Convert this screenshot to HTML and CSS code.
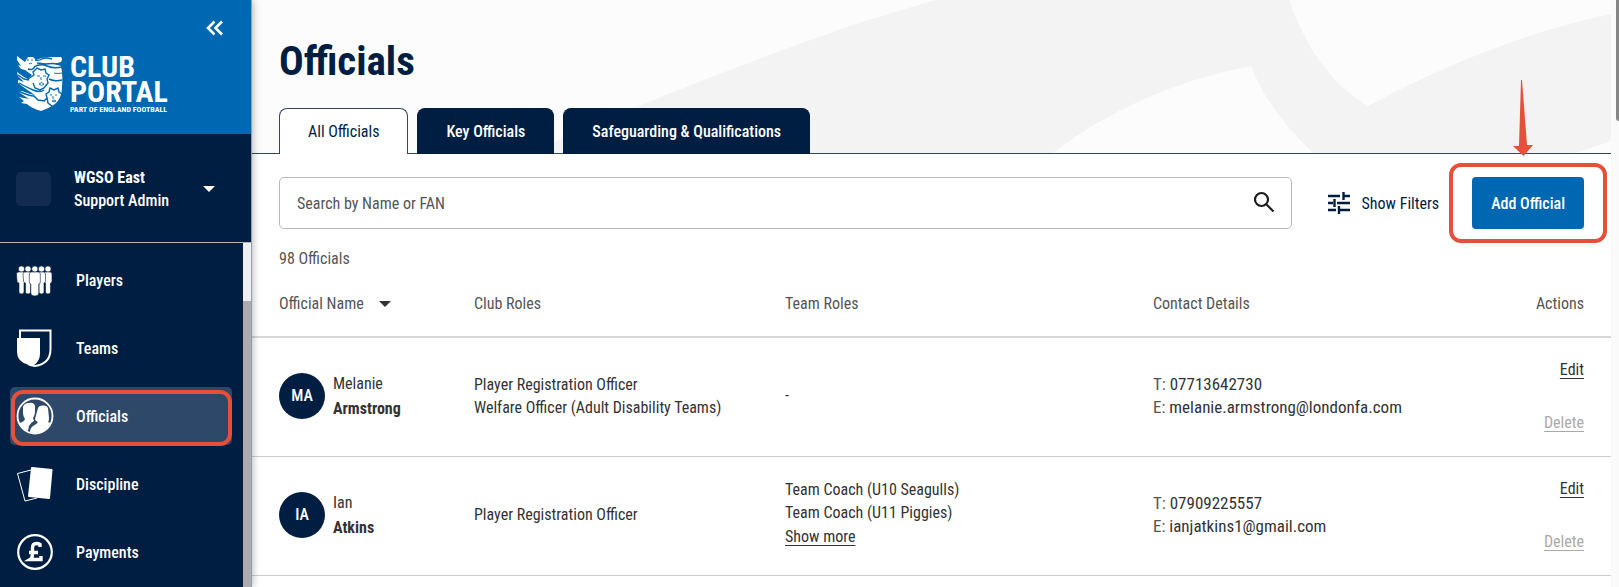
FILE: index.html
```html
<!DOCTYPE html>
<html lang="en">
<head>
  <meta charset="utf-8">
  <title>Club Portal - Officials</title>
  <meta name="viewport" content="width=device-width, initial-scale=1.0">
  <link rel="stylesheet" href="styles.css">
</head>
<body>
  <aside class="sidebar">
    <div class="brand">
      <button class="collapse" aria-label="Collapse menu">
        <svg width="18" height="16" viewBox="0 0 18 16" fill="none" stroke="#fff" stroke-width="2.6"><path d="M8.500 1.500 2 8l6.500 6.500M16 1.500 9.500 8l6.500 6.500"/></svg>
      </button>
      <a class="logo" href="#">
        <svg width="48" height="57" viewBox="0 0 48 57">
          <path fill="#fff" d="M1 1 5 4 9 7 12 2 17 2 20 5 26 3 34 2 45 2Q47 4 45 7L38 9 45 11Q47 20 46 32Q46 43 39 49Q32 54 25 56Q15 53 11 49L5 48 8 46 3 42 8 43 13 44 4 38 2 36 6 36 14 39 19 40 10 34 2 28 2 25 8 27 2 21 1 17 8 22 12 24 16 20 9 15 5 14 2 10 5 11 1 5Z"/>
          <g fill="none" stroke="#0068b3">
            <path stroke-width="1.400" d="M19 5Q23 6 26 4T36 4M21 8 30 9Q35 8 44 9M18 12Q24 8 31 11T46 12M12 24 18 20 17 17 21 13 25 15 29 14 30 18 33 20 31 24 32 28 28 33 24 35 19 33 17 28M33 24Q39 27 46 25M3 28Q10 32 17 35T28 35M2 20 8 24 13 25M2 36Q13 41 18 41L22 45 29 46M28 46 31 43 30 39 33 37 34 33 38 35 42 33 43 37 46 39M12 14Q17 16 19 11M31 43 32 48 36 51"/>
            <path stroke-width=".900" d="M21 21h3M27 21h3M25 22v3M23 29Q26 26 28 29Q26 32 23 29M11 5h2M15 5h2M13 9Q15 7 16 9M34 40h2M39 40h2M37 41v3M36 46Q38 44 40 46Q38 48 36 46M38 18Q42 19 46 18"/>
          </g>
        </svg>
        <span class="logo-text">
          <span>CLUB</span>
          <span>PORTAL</span>
          <small>PART OF ENGLAND FOOTBALL</small>
        </span>
      </a>
    </div>

    <button class="account">
      <span class="badge"></span>
      <span class="who"><strong>WGSO East</strong><span>Support Admin</span></span>
      <svg width="12" height="6" viewBox="0 0 12 6"><path fill="#fff" d="M0 0h12L6 6z"/></svg>
    </button>

    <div class="nav-wrap">
      <nav class="nav">
        <a href="#">
          <svg width="38" height="38" viewBox="0 0 38 38" fill="#fff" stroke="#001e42" stroke-width=".6">
            <g id="man"><circle cx="5.500" cy="8" r="3.100"/><path d="M.5 13q0-2 2-2h5q2 0 2 2v7q0 2-1.500 2v9q0 2-2.500 2t-2.500-2v-9q-2 0-2-2z"/></g>
            <use href="#man" x="26.500"/>
            <use href="#man" x="6.500"/>
            <use href="#man" x="20"/>
            <circle cx="18.800" cy="8" r="3.100"/><path d="M13.300 13q0-2 2-2h7q2 0 2 2v8q0 2-1.500 2v9q0 3-4 3t-4-3v-9q-1.500 0-1.500-2z"/>
          </svg>
          Players
        </a>
        <a href="#">
          <svg width="38" height="38" viewBox="0 0 38 38">
            <path fill="none" stroke="#fff" stroke-width="2" d="M4 9V1.500h30.500V20q0 15-15.500 17-4-.500-7-2"/>
            <path fill="#fff" d="M1 9h23v16q0 7-6 11h-5Q1 33 1 23z"/>
          </svg>
          Teams
        </a>
        <a href="#" class="active">
          <svg width="38" height="38" viewBox="0 0 38 38">
            <circle cx="19" cy="19" r="17.500" fill="none" stroke="#fff" stroke-width="1.800"/>
            <path fill="#fff" d="M7 10q1-4 6-4 5-1 6 3v7q-1 4-2 5l1 3q-4 2-5 5l-1 5Q6 32 3 26q5-1 6-4-2-3-2-6z"/>
            <path fill="#fff" d="M22 11q1-3 5-2.500 4-.500 5 2.500l1 10q0 3-1 4 3 1 2 2-4 9-15 9-3 0-5-1 0-4 3-6 4-2 5-4-3-1-3-3z"/>
          </svg>
          Officials
          <span class="ring"></span>
        </a>
        <a href="#">
          <svg width="38" height="38" viewBox="0 0 38 38">
            <path fill="none" stroke="#fff" d="M15 5 1.500 8.500 9 36l12-3"/>
            <path fill="#fff" d="M16 2l20 2q.5 0 .5 1L34 33q0 1-1 1l-20-2q-1 0-1-1l3-28q0-1 1-1z"/>
          </svg>
          Discipline
        </a>
        <a href="#">
          <svg width="38" height="38" viewBox="0 0 38 38">
            <circle cx="19" cy="19" r="16.800" fill="none" stroke="#fff" stroke-width="2.200"/>
            <path fill="none" stroke="#fff" stroke-width="3.400" d="M24 14v-2.500q-1.500-1-3.500-1-4 0-4 4.500v6q0 4-2.500 5.500h11v-3.500M13 19.500h9"/>
          </svg>
          Payments
        </a>
      </nav>
      <div class="nav-scroll"><span></span></div>
    </div>
  </aside>

  <main class="main">
    <header class="hero">
      <svg class="hero-art" viewBox="252 0 1359 153" preserveAspectRatio="xMaxYMin slice">
        <path fill="#f3f3f3" d="M936 0Q890 13 850 26Q680 85 530 153H1053Q1137 88 1251 66Q1268 110 1313 153H1576L1611 141V14Q1490 40 1368 106Q1315 75 1289 0Z"/>
      </svg>
      <h1>Officials</h1>
      <div class="tabs">
        <button class="tab selected">All Officials</button>
        <button class="tab">Key Officials</button>
        <button class="tab">Safeguarding &amp; Qualifications</button>
      </div>
    </header>

    <div class="toolbar">
      <div class="search">
        <input type="text" aria-label="Search officials" placeholder="Search by Name or FAN">
        <svg width="24" height="24" viewBox="0 0 24 24" fill="none" stroke="#1c1c1c" stroke-width="2.200"><circle cx="9.500" cy="8.500" r="6.500"/><path d="m14.500 13.500 7 7"/></svg>
      </div>
      <button class="filters">
        <svg width="22" height="22" viewBox="0 0 22 22" fill="none" stroke="#001e42" stroke-width="2.400"><path d="M0 4h12M15.500 4H22M15.500 0v8M0 11h5M9 11h13M6.500 7v8M0 18h8M11 18h11M11 14v8"/></svg>
        Show Filters
      </button>
      <div class="add">
        <button class="primary">Add Official</button>
        <span class="ring"></span>
        <svg class="arrow" width="22" height="76" viewBox="0 0 22 76"><path fill="#e64f3a" d="M9 0h1l5 65h6L11.500 76 1 66h6z"/></svg>
      </div>
    </div>

    <p class="count">98 Officials</p>

    <table class="officials">
      <colgroup><col class="c-name"><col class="c-club"><col class="c-team"><col><col class="c-act"></colgroup>
      <thead>
        <tr>
          <th>Official Name <svg width="12" height="6" viewBox="0 0 12 6"><path fill="#333" d="M0 0h12L6 6z"/></svg></th>
          <th>Club Roles</th>
          <th>Team Roles</th>
          <th>Contact Details</th>
          <th class="actions">Actions</th>
        </tr>
      </thead>
      <tbody>
        <tr>
          <td><div class="person"><span class="initials">MA</span><span class="name">Melanie<b>Armstrong</b></span></div></td>
          <td>Player Registration Officer<br>Welfare Officer (Adult Disability Teams)</td>
          <td>-</td>
          <td class="contact"><i>T:</i> 07713642730<br><i>E:</i> melanie.armstrong@londonfa.com</td>
          <td class="actions"><a href="#">Edit</a><a href="#" class="off">Delete</a></td>
        </tr>
        <tr>
          <td><div class="person"><span class="initials">IA</span><span class="name">Ian<b>Atkins</b></span></div></td>
          <td>Player Registration Officer</td>
          <td>Team Coach (U10 Seagulls)<br>Team Coach (U11 Piggies)<br><a href="#" class="more">Show more</a></td>
          <td class="contact"><i>T:</i> 07909225557<br><i>E:</i> ianjatkins1@gmail.com</td>
          <td class="actions"><a href="#">Edit</a><a href="#" class="off">Delete</a></td>
        </tr>
      </tbody>
    </table>
  </main>
  <div class="page-scroll"><span></span></div>
</body>
</html>
```
FILE: styles.css
```css
* { box-sizing: border-box; }
body { display: flex; height: 100vh; margin: 0; overflow: hidden; background: #fff; color: #333; font: 400 16px/23px "Roboto Condensed", Roboto, sans-serif; }
button, input { font: inherit; }
button { padding: 0; border: none; background: none; cursor: pointer; }
svg { flex: none; }

.sidebar { position: relative; z-index: 1; display: flex; flex-direction: column; flex: none; width: 252px; background: #001e42; color: #fff; border-right: 1px solid #8fa0b3; box-shadow: 0 0 8px rgba(0, 0, 0, .35); }
.brand { display: flex; flex-direction: column; height: 134px; padding: 20px 27px 0 16px; background: #0068b3; }
.collapse { align-self: flex-end; height: 16px; line-height: 0; }
.logo { display: flex; gap: 6px; margin-top: 18px; color: #fff; text-decoration: none; }
.logo svg { margin-top: 1px; }
.logo-text { display: flex; flex-direction: column; font-size: 30px; font-weight: 700; line-height: 25px; }
.logo-text small { margin-top: 2px; font-size: 8px; line-height: 8px; white-space: nowrap; }
.account { display: flex; align-items: center; height: 109px; padding: 2px 36px 0 16px; border-bottom: 1px solid #b5b5b5; color: #fff; text-align: left; }
.badge { width: 35px; height: 34px; border-radius: 5px; background: #122c50; }
.who { display: flex; flex: 1; flex-direction: column; margin-left: 23px; font-weight: 500; }
.nav-wrap { display: flex; flex: 1; min-height: 0; }
.nav { display: flex; flex: 1; flex-direction: column; gap: 10px; padding: 8px 11px 0 10px; overflow: hidden; font-weight: 500; }
.nav a { position: relative; display: flex; flex: none; align-items: center; gap: 22px; height: 58px; padding-left: 6px; border-radius: 5px; color: #fff; text-decoration: none; }
.nav .active { background: #2e4869; }
.nav-scroll { width: 8px; padding-top: 58px; background: #efefef; }
.nav-scroll span { display: block; height: 100%; background: #acacac; }

.ring { position: absolute; border: 4px solid #e64f3a; border-radius: 12px; pointer-events: none; }
.nav .ring { inset: 3px 0 -1px 1px; }
.add { position: relative; }
.add .ring { inset: -14px -23px; }
.arrow { position: absolute; bottom: 73px; left: 40px; }

.main { flex: 1; min-width: 0; }
.hero { position: relative; height: 154px; padding: 37px 27px 0; background: #fcfcfc; border-bottom: 1px solid #33475f; }
.hero-art { position: absolute; inset: 0; width: 100%; height: 100%; }
h1 { position: relative; margin: 0 0 23px; color: #001e42; font-size: 41px; font-weight: 700; line-height: 48px; }
.tabs { position: relative; display: flex; gap: 9px; }
.tab { height: 46px; padding: 0 28px; border: 1px solid #001e42; border-bottom: none; border-radius: 8px 8px 0 0; background: #001e42; color: #fff; font-weight: 500; }
.tab.selected { background: #fff; border-color: #33475f; color: #001e42; font-weight: 400; }

.toolbar { display: flex; padding: 23px 27px 0; }
.search { display: flex; flex: 1; align-items: center; height: 52px; padding: 0 15px 0 17px; border: 1px solid #b9b9b9; border-radius: 5px; }
.search input { flex: 1; padding: 0; border: none; outline: none; background: none; }
.search input::placeholder { color: #555; opacity: 1; }
.filters { display: flex; align-items: center; gap: 12px; margin: 0 33px 0 36px; color: #001e42; }
.primary { height: 52px; padding: 0 19px; border-radius: 4px; background: #0068b3; color: #fff; font-weight: 500; }

.count { margin: 18px 27px 0; color: #555; }
.officials { width: 100%; table-layout: fixed; border-collapse: collapse; }
.c-name { width: 222px; }
.c-club { width: 311px; }
.c-team { width: 368px; }
.c-act { width: 100px; }
th, td { padding: 0; text-align: left; }
th { height: 67px; border-bottom: 2px solid #d8d8d8; color: #555; font-weight: 400; }
th svg { margin: 0 0 2px 12px; }
td { height: 119px; padding-bottom: 2px; border-bottom: 1px solid #ccc; }
th:first-child, td:first-child { padding-left: 27px; }
td a { color: #333; text-underline-offset: 3px; }
.more { display: inline-block; margin: 1px 0 3px; }
.person { display: flex; align-items: center; gap: 8px; }
.initials { width: 46px; height: 46px; border-radius: 50%; background: #001e42; color: #fff; font-weight: 500; line-height: 46px; text-align: center; }
.name { display: flex; flex-direction: column; line-height: 25px; }
.contact { font-size: 17px; }
.contact i { color: #555; font-style: normal; }
.actions { padding-right: 27px; text-align: right; }
.actions a { display: block; }
.actions .off { margin-top: 30px; color: #aaa; }

.page-scroll { flex: none; width: 8px; padding-left: 5px; background: #fafafa; }
.page-scroll span { display: block; height: 121px; border-radius: 0 0 0 4px; background: #858585; }
```
